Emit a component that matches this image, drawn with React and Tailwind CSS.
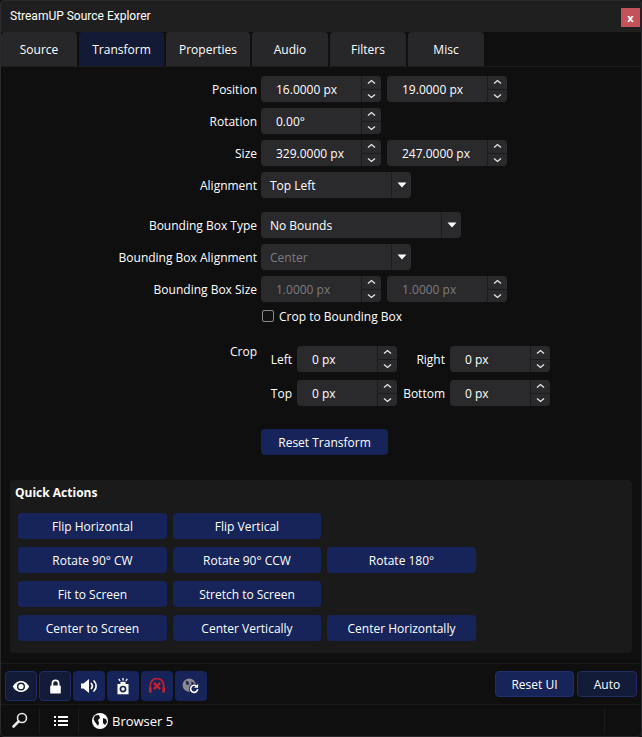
import React from "react";

const font = "font-['Open_Sans',sans-serif]";

function Chevrons() {
  return (
    <div className="w-5 h-full flex flex-col border-l border-[#1b1b1d]">
      <div className="flex-1 flex items-center justify-center border-b border-[#1b1b1d]">
        <svg width="9" height="6" viewBox="0 0 9 6" fill="none" stroke="#e8e8e8" strokeWidth="1.3">
          <path d="M1 4.500 4.500 1.500 8 4.500" />
        </svg>
      </div>
      <div className="flex-1 flex items-center justify-center">
        <svg width="9" height="6" viewBox="0 0 9 6" fill="none" stroke="#e8e8e8" strokeWidth="1.3">
          <path d="M1 1.500 4.500 4.500 8 1.500" />
        </svg>
      </div>
    </div>
  );
}

function Spin({ value, disabled, small }) {
  return (
    <div className={`${small ? "w-[100px]" : "w-[120px]"} h-[26px] rounded-[4px] bg-[#2a2a2d] flex items-center`}>
      <div className={`flex-1 pl-[15px] pt-[2px] ${disabled ? "text-[#7c7c7e]" : "text-white"}`}>{value}</div>
      <Chevrons />
    </div>
  );
}

function Select({ value, width, disabled }) {
  return (
    <div className={`${width} h-[26px] rounded-[4px] bg-[#2a2a2d] flex items-center`}>
      <div className={`flex-1 pl-[9px] pt-[2px] ${disabled ? "text-[#7c7c7e]" : "text-white"}`}>{value}</div>
      <div className="w-[20px] h-[24px] border-l border-[#1b1b1d] flex items-center justify-center">
        <svg width="10" height="6" viewBox="0 0 10 6" fill="#fff">
          <path d="M0.500 0.500h9L5 5.500z" />
        </svg>
      </div>
    </div>
  );
}

function Row({ label, className, children }) {
  return (
    <div className={`flex items-center h-[26px] ${className || ""}`}>
      <div className="w-[257px] pt-[2px] text-right text-white">{label}</div>
      <div className="ml-1 flex gap-[6px]">{children}</div>
    </div>
  );
}

function ActionBtn({ children, className }) {
  return (
    <button className={`h-[26px] pt-[2px] rounded-[4px] bg-[#16245a] text-white ${className}`}>{children}</button>
  );
}

function IconBtn({ active, children }) {
  return (
    <div
      className={`w-8 h-[30px] rounded-[4px] flex items-center justify-center ${
        active ? "bg-[#121b38] border border-[#1d2c68]" : "bg-[#16245a]"
      }`}
    >
      {children}
    </div>
  );
}

const tabs = [
  ["Source", "w-[76px]"],
  ["Transform", "w-[85px]"],
  ["Properties", "w-[84px]"],
  ["Audio", "w-[76px]"],
  ["Filters", "w-[76px]"],
  ["Misc", "w-[76px]"],
];

export default function App() {
  return (
    <div className={`relative w-[642px] h-[737px] bg-[#0f0f10] flex flex-col overflow-hidden text-[12px] leading-[18px] ${font}`}>
      {/* window edge */}
      <div className="absolute inset-0 rounded-[4px] border border-[#2b2b2d] pointer-events-none" />

      {/* title bar */}
      <div className="h-[32px] shrink-0 bg-[#1f1f20] rounded-t-[4px] flex items-center pl-[10px] pr-[2px] justify-between text-white">
        <span className="font-['Roboto',sans-serif]">StreamUP Source Explorer</span>
        <div className="w-[19px] h-[19px] mt-[3px] bg-[#c4525a] flex items-center justify-center text-[11px] leading-none font-bold text-white">
          x
        </div>
      </div>

      {/* tabs */}
      <div className="h-[35px] shrink-0 pl-[1px] flex gap-[2px] border-b border-[#1d1d1e]">
        {tabs.map(([name, w]) => (
          <div
            key={name}
            className={`${w} h-[34px] pt-[2px] rounded-t-[4px] flex items-center justify-center text-white ${
              name === "Transform" ? "bg-[#131a35]" : "bg-[#272729]"
            }`}
          >
            {name}
          </div>
        ))}
      </div>

      {/* form */}
      <div className="pt-[9px] flex flex-col">
        <Row label="Position">
          <Spin value="16.0000 px" />
          <Spin value="19.0000 px" />
        </Row>
        <Row label="Rotation" className="mt-[6px]">
          <Spin value="0.00°" />
        </Row>
        <Row label="Size" className="mt-[6px]">
          <Spin value="329.0000 px" />
          <Spin value="247.0000 px" />
        </Row>
        <Row label="Alignment" className="mt-[6px]">
          <Select value="Top Left" width="w-[150px]" />
        </Row>
        <Row label="Bounding Box Type" className="mt-[14px]">
          <Select value="No Bounds" width="w-[200px]" />
        </Row>
        <Row label="Bounding Box Alignment" className="mt-[6px]">
          <Select value="Center" width="w-[150px]" disabled />
        </Row>
        <Row label="Bounding Box Size" className="mt-[6px]">
          <Spin value="1.0000 px" disabled />
          <Spin value="1.0000 px" disabled />
        </Row>
        <div className="ml-[262px] mt-[5px] h-[18px] flex items-center gap-[5px] text-white">
          <div className="w-3 h-3 rounded-[2px] border border-[#8a8a8a]" />
          <span className="pt-[2px]">Crop to Bounding Box</span>
        </div>

        {/* crop */}
        <div className="flex mt-[21px]">
          <div className="w-[257px] mt-[-3px] text-right text-white">Crop</div>
          <div className="ml-1 grid grid-cols-[31px_100px_53px_100px] gap-y-2 items-center text-white">
            <div className="text-right pt-[2px]">Left</div>
            <div className="ml-[5px]"><Spin value="0 px" small /></div>
            <div className="text-right pt-[2px]">Right</div>
            <div className="ml-[5px]"><Spin value="0 px" small /></div>
            <div className="text-right pt-[2px]">Top</div>
            <div className="ml-[5px]"><Spin value="0 px" small /></div>
            <div className="text-right pt-[2px]">Bottom</div>
            <div className="ml-[5px]"><Spin value="0 px" small /></div>
          </div>
        </div>

        <ActionBtn className="w-[127px] ml-[261px] mt-[23px]">Reset Transform</ActionBtn>
      </div>

      {/* quick actions */}
      <div className="mx-[10px] mt-[25px] h-[173px] rounded-[4px] bg-[#1a1a1b] px-[8px] pt-[4px] flex flex-col">
        <div className="ml-[-3px] font-bold text-white">Quick Actions</div>
        <div className="mt-[11px] flex flex-col gap-2">
          <div className="flex gap-[6px]">
            <ActionBtn className="w-[149px]">Flip Horizontal</ActionBtn>
            <ActionBtn className="w-[148px]">Flip Vertical</ActionBtn>
          </div>
          <div className="flex gap-[6px]">
            <ActionBtn className="w-[149px]">Rotate 90° CW</ActionBtn>
            <ActionBtn className="w-[148px]">Rotate 90° CCW</ActionBtn>
            <ActionBtn className="w-[149px]">Rotate 180°</ActionBtn>
          </div>
          <div className="flex gap-[6px]">
            <ActionBtn className="w-[149px]">Fit to Screen</ActionBtn>
            <ActionBtn className="w-[148px]">Stretch to Screen</ActionBtn>
          </div>
          <div className="flex gap-[6px]">
            <ActionBtn className="w-[149px]">Center to Screen</ActionBtn>
            <ActionBtn className="w-[148px]">Center Vertically</ActionBtn>
            <ActionBtn className="w-[149px]">Center Horizontally</ActionBtn>
          </div>
        </div>
      </div>

      {/* toolbar */}
      <div className="mt-[10px] h-[42px] shrink-0 border-t border-b border-[#1a1a1b] pl-[5px] pr-[5px] flex items-start pt-[7px] justify-between">
        <div className="flex gap-[2px]">
          <IconBtn active>
            <svg width="18" height="13" viewBox="0 1 18 12">
              <path fill="#fff" fillRule="evenodd" d="M9 1.500C5.200 1.500 2.300 4 .8 7c1.500 3 4.400 5.500 8.200 5.500s6.700-2.500 8.200-5.500C15.700 4 12.800 1.500 9 1.500zm0 1.500a4 4 0 1 1 0 8 4 4 0 0 1 0-8z" />
              <circle cx="9" cy="7" r="2.600" fill="#fff" />
            </svg>
          </IconBtn>
          <IconBtn active>
            <svg width="13" height="15" viewBox="0 0 14 17">
              <path fill="none" stroke="#fff" strokeWidth="2" d="M3.500 8V5a3.500 3.500 0 0 1 7 0v3" />
              <rect x="1" y="7.500" width="12" height="9" rx="1" fill="#fff" />
            </svg>
          </IconBtn>
          <IconBtn>
            <svg width="16" height="14" viewBox="0 0 16 14">
              <path fill="#fff" d="M0 4.500h2.500L8 0v14L2.500 9.500H0z" />
              <path fill="none" stroke="#fff" strokeWidth="1.700" strokeLinecap="round" d="M10.300 4.500a3.500 3.500 0 0 1 0 5M13 2a7 7 0 0 1 0 10" />
            </svg>
          </IconBtn>
          <IconBtn>
            <svg width="14" height="17" viewBox="0 0 16 20">
              <path stroke="#fff" strokeWidth="1.600" d="M8 0v3M3 1l1.500 2.500M13 1l-1.500 2.500" />
              <rect x="5" y="4.500" width="6" height="2.500" fill="#fff" />
              <path fill="#fff" fillRule="evenodd" d="M1.500 7h13v12h-13zM8 9a4 4 0 1 0 0 8 4 4 0 0 0 0-8z" />
              <circle cx="8" cy="13" r="2" fill="#fff" />
            </svg>
          </IconBtn>
          <IconBtn>
            <svg width="16" height="16" viewBox="0 0 18 18">
              <path fill="none" stroke="#c8202f" strokeWidth="1.800" d="M1.500 11V8a7.500 7.500 0 0 1 15 0v3" />
              <rect x="0" y="10" width="3" height="6.500" rx="1" fill="#c8202f" />
              <rect x="15" y="10" width="3" height="6.500" rx="1" fill="#c8202f" />
              <path stroke="#c8202f" strokeWidth="2.600" d="M5.500 5.500l7 7M12.500 5.500l-7 7" />
            </svg>
          </IconBtn>
          <IconBtn>
            <svg width="18" height="16" viewBox="0 0 20 18">
              <circle cx="8" cy="8" r="7.500" fill="#8a8a90" />
              <path fill="#16245a" d="M4 3l3 1 1 3-3 1zM10 4l3 1 0 3-2 0z" />
              <circle cx="13.500" cy="12" r="5.800" fill="#16245a" />
              <path fill="none" stroke="#fff" strokeWidth="1.800" d="M17.500 12.500a4 4 0 1 1-1.300-3.300" />
              <path fill="#fff" d="M18 6.500v4.500h-4.500z" />
            </svg>
          </IconBtn>
        </div>
        <div className="flex gap-[3px]">
          <button className="w-[79px] h-[26px] pt-[2px] rounded-[4px] bg-[#16245a] border border-[#1f2f6e] text-white">Reset UI</button>
          <button className="w-[60px] h-[26px] pt-[2px] rounded-[4px] bg-[#121b38] border border-[#1d2c68] text-white">Auto</button>
        </div>
      </div>

      {/* status bar */}
      <div className="flex-1 pb-[1px] flex items-center text-white">
        <div className="w-[40px] h-[26px] flex items-center justify-center border-r border-[#1b1b1c]">
          <svg width="17" height="17" viewBox="0 0 17 17" fill="none" stroke="#e8e8e8">
            <circle cx="11" cy="6" r="4.500" strokeWidth="1.600" />
            <path strokeWidth="2.600" strokeLinecap="round" d="M7.500 9.500 2.500 14.500" />
          </svg>
        </div>
        <div className="w-[39px] h-[26px] pl-[3px] flex items-center justify-center border-r border-[#1b1b1c]">
          <svg width="14" height="12" viewBox="0 0 14 12" fill="#fff">
            <path d="M0 1h2v2H0zM4 1h10v2H4zM0 5h2v2H0zM4 5h10v2H4zM0 9h2v2H0zM4 9h10v2H4z" />
          </svg>
        </div>
        <div className="ml-[13px] flex items-center gap-[4px]">
          <svg width="16" height="16" viewBox="0 0 16 16">
            <circle cx="8" cy="8" r="8" fill="#fff" />
            <path fill="#111" d="M3 2.500 7 2l1 3-2 2 1 3-1 3-3-4-1.500-3zM11 5l3 1 1 3-2 3-2-2z" />
          </svg>
          <span className="text-[13px]">Browser 5</span>
        </div>
        <div className="ml-auto mr-[37px] w-[1px] h-[26px] bg-[#1b1b1c]" />
      </div>
    </div>
  );
}
